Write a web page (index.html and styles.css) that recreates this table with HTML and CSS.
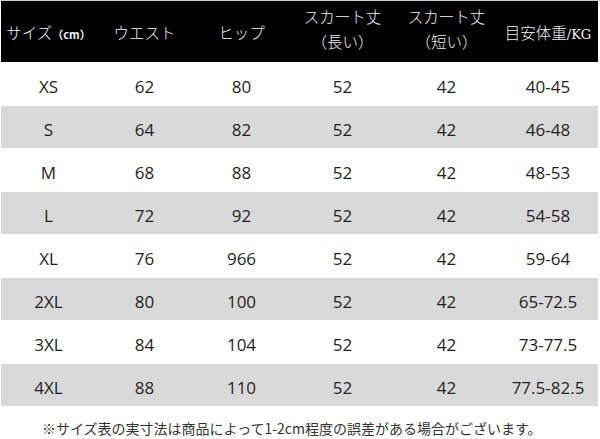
FILE: index.html
```html
<!DOCTYPE html>
<html lang="ja">
<head>
<meta charset="utf-8">
<link rel="stylesheet" href="styles.css">
</head>
<body>
<div class="chart">
  <div class="row head">
    <div class="cell">サイズ<span class="unit">（cm）</span></div>
    <div class="cell">ウエスト</div>
    <div class="cell">ヒップ</div>
    <div class="cell two"><span>スカート丈</span><span>（長い）</span></div>
    <div class="cell two"><span>スカート丈</span><span>（短い）</span></div>
    <div class="cell">目安体重<span class="kg">/KG</span></div>
  </div>
  <div class="row"><div class="cell">XS</div><div class="cell">62</div><div class="cell">80</div><div class="cell">52</div><div class="cell">42</div><div class="cell">40-45</div></div>
  <div class="row alt"><div class="cell">S</div><div class="cell">64</div><div class="cell">82</div><div class="cell">52</div><div class="cell">42</div><div class="cell">46-48</div></div>
  <div class="row"><div class="cell">M</div><div class="cell">68</div><div class="cell">88</div><div class="cell">52</div><div class="cell">42</div><div class="cell">48-53</div></div>
  <div class="row alt"><div class="cell">L</div><div class="cell">72</div><div class="cell">92</div><div class="cell">52</div><div class="cell">42</div><div class="cell">54-58</div></div>
  <div class="row"><div class="cell">XL</div><div class="cell">76</div><div class="cell">966</div><div class="cell">52</div><div class="cell">42</div><div class="cell">59-64</div></div>
  <div class="row alt"><div class="cell">2XL</div><div class="cell">80</div><div class="cell">100</div><div class="cell">52</div><div class="cell">42</div><div class="cell">65-72.5</div></div>
  <div class="row"><div class="cell">3XL</div><div class="cell">84</div><div class="cell">104</div><div class="cell">52</div><div class="cell">42</div><div class="cell">73-77.5</div></div>
  <div class="row alt"><div class="cell">4XL</div><div class="cell">88</div><div class="cell">110</div><div class="cell">52</div><div class="cell">42</div><div class="cell">77.5-82.5</div></div>
</div>
<p class="note">※サイズ表の実寸法は商品によって1-2cm程度の誤差がある場合がございます。</p>
</body>
</html>
```

FILE: styles.css
```css
* { box-sizing: border-box; }
html, body { margin: 0; padding: 0; background: #fff; }
body {
  width: 600px;
  height: 439px;
  overflow: hidden;
  border-top: 1px solid #cfcfcf;
}
.chart {
  padding: 0 2px 0 1px;
}
.row {
  display: grid;
  grid-template-columns: 95px 97px 97px 105px 103px 1fr;
  height: 42px;
  margin-top: 1px;
  align-items: center;
  font-family: "Open Sans", "Noto Sans", sans-serif;
  font-size: 17px;
  color: #1f1f1f;
}
.row.alt { background: #d9d9d9; }
.row.head {
  height: 61px;
  margin-top: 0;
  background: #000;
  color: #f2f2f2;
  font-family: "Noto Sans CJK JP", sans-serif;
  font-size: 15.5px;
  font-weight: 300;
}
.cell {
  text-align: center;
  white-space: nowrap;
  padding-top: 4px;
}
.head .cell { padding-top: 0; }
.head .cell.two {
  display: flex;
  flex-direction: column;
  align-items: center;
  line-height: 25px;
  margin-top: -5px;
}
.unit {
  font-size: 11px;
  font-weight: 700;
}
.kg {
  font-family: "DejaVu Serif", serif;
  font-size: 13px;
}
.note {
  margin: 12px 0 0 42px;
  font-family: "Noto Sans CJK JP", sans-serif;
  font-size: 14px;
  color: #333;
  line-height: 20px;
  white-space: nowrap;
}
```
